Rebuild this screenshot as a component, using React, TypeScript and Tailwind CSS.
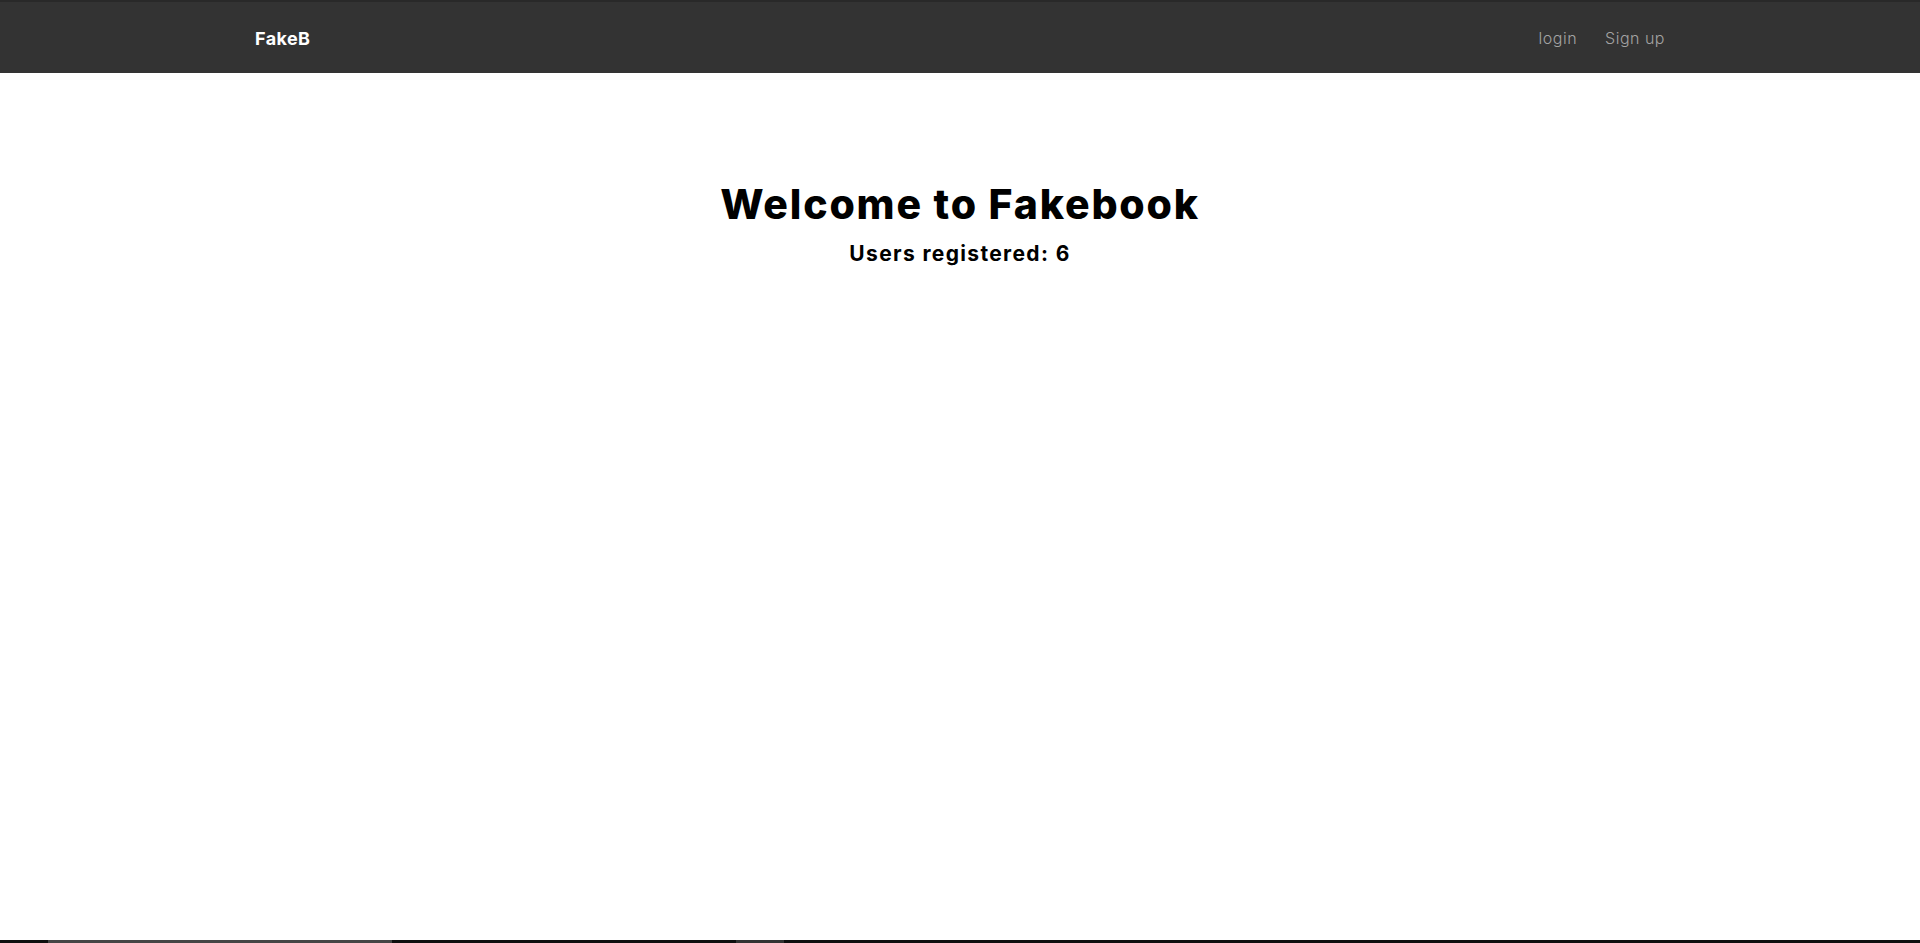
import React from "react";

export default function App() {
  return (
    <div className="relative min-h-[943px] bg-white" style={{ fontFamily: "Inter, 'Noto Sans', sans-serif" }}>
      <nav className="h-[73px] bg-[#333333] border-t-2 border-[#292929]">
        <div className="mx-auto flex h-full w-[1440px] items-center justify-between px-[15px] pt-[1px]">
          <a className="text-[18px] font-bold text-white tracking-[0.4px]">FakeB</a>
          <div className="flex items-center gap-[28px] text-[16px] font-light text-[#a3a3a3] tracking-[0.5px]">
            <a>login</a>
            <a>Sign up</a>
          </div>
        </div>
      </nav>
      <main className="flex flex-col items-center pt-[106px]">
        <h1 className="text-[41px] font-extrabold leading-[50px] text-black tracking-[1.8px]">Welcome to Fakebook</h1>
        <h3 className="mt-[11px] text-[21px] font-bold leading-[28px] text-black tracking-[1.35px]">Users registered: 6</h3>
      </main>
      <div className="absolute bottom-0 left-0 right-0 flex h-[3px] bg-[#0f0f0f]">
        <div className="ml-[48px] w-[344px] bg-[#454545]" />
        <div className="ml-[344px] w-[48px] bg-[#333333]" />
      </div>
    </div>
  );
}
